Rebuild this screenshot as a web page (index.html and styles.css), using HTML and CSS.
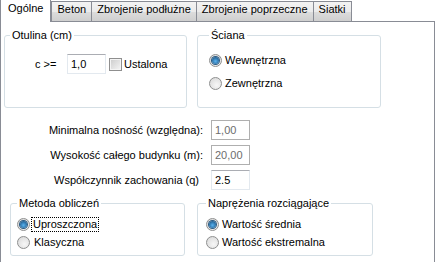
FILE: index.html
```html
<!DOCTYPE html>
<html lang="pl">
<head>
    <meta charset="UTF-8">
    <title>Parametry ściany</title>
    <link rel="stylesheet" href="styles.css">
</head>
<body>
    <div class="tabs">
        <div class="tab active">Ogólne</div>
        <div class="tab">Beton</div>
        <div class="tab">Zbrojenie podłużne</div>
        <div class="tab">Zbrojenie poprzeczne</div>
        <div class="tab">Siatki</div>
    </div>

    <div class="page">
        <div class="group-row top-row">
            <fieldset class="group cover">
                <legend>Otulina (cm)</legend>
                <div class="cover-line">
                    <span class="cover-label">c &gt;=</span>
                    <div class="field">1,0</div>
                    <span class="check"></span>
                    <span class="check-label">Ustalona</span>
                </div>
            </fieldset>
            <fieldset class="group wall">
                <legend>Ściana</legend>
                <div class="option first"><span class="radio on"></span><span>Wewnętrzna</span></div>
                <div class="option second"><span class="radio"></span><span>Zewnętrzna</span></div>
            </fieldset>
        </div>

        <div class="params">
            <label>Minimalna nośność (względna):</label>
            <div class="field off">1,00</div>
            <label>Wysokość całego budynku (m):</label>
            <div class="field off">20,00</div>
            <label class="no-colon">Współczynnik zachowania (q)</label>
            <div class="field">2.5</div>
        </div>

        <div class="group-row bottom-row">
            <fieldset class="group method">
                <legend>Metoda obliczeń</legend>
                <div class="option first"><span class="radio on"></span><span class="focus">Uproszczona</span></div>
                <div class="option"><span class="radio"></span><span class="plain">Klasyczna</span></div>
            </fieldset>
            <fieldset class="group stress">
                <legend>Naprężenia rozciągające</legend>
                <div class="option first"><span class="radio on"></span><span>Wartość średnia</span></div>
                <div class="option"><span class="radio"></span><span>Wartość ekstremalna</span></div>
            </fieldset>
        </div>
    </div>
</body>
</html>
```

FILE: styles.css
```css
body {
    margin: 0;
    background: #fff;
    color: #000;
    font-family: "Liberation Sans", Arial, sans-serif;
    font-size: 11px;
    line-height: 13px;
}
.tabs {
    display: flex;
    align-items: flex-end;
    height: 21px;
}
.tab {
    height: 18px;
    padding: 1px 5px 0 5px;
    border: 1px solid #898c95;
    border-bottom: none;
    margin-left: -1px;
    background: linear-gradient(#f3f3f3, #ebebeb 50%, #dddddd 51%, #cfcfcf);
}
.tab.active {
    position: relative;
    z-index: 1;
    height: 20px;
    padding: 2px 7px 0 7px;
    margin-left: 0;
    margin-bottom: -1px;
    margin-right: 1px;
    background: #fff;
}
.page {
    width: 433px;
    height: 240px;
    border: 1px solid #898c95;
}
.group-row {
    display: flex;
}
.top-row {
    margin-top: 7px;
    padding-left: 3px;
    gap: 10px;
}
.bottom-row {
    margin-top: 7px;
    padding-left: 9px;
    gap: 12px;
}
.group {
    box-sizing: border-box;
    margin: 0;
    min-width: 0;
    padding: 0 5px;
    border: 1px solid #d5dfe5;
    border-radius: 3px;
}
.group legend {
    padding: 0 2px;
    line-height: 13px;
}
.cover { width: 183px; height: 79px; }
.wall { width: 184px; height: 79px; padding-left: 11px; }
.method { width: 175px; height: 59px; padding-left: 6px; }
.stress { width: 176px; height: 59px; padding-left: 8px; }

.cover-line {
    display: flex;
    align-items: center;
    margin-top: 12px;
    padding-left: 25px;
}
.cover-label {
    width: 32px;
}
.field {
    box-sizing: border-box;
    width: 39px;
    height: 20px;
    padding: 3px 0 0 3px;
    border: 1px solid #e3e9ef;
    border-top-color: #abadb3;
    background: #fff;
}
.field.off {
    color: #6d6d6d;
    border-color: #afafaf;
}
.check {
    box-sizing: border-box;
    width: 13px;
    height: 13px;
    margin-left: 3px;
    border: 1px solid #8f8f8f;
    box-shadow: inset 0 0 0 1px #f4f4f4;
    background: linear-gradient(135deg, #cbcbcb, #f6f6f6);
}
.check-label {
    margin-left: 2px;
}

.option {
    display: flex;
    align-items: center;
    gap: 3px;
    height: 13px;
}
.wall .option.first { margin-top: 12px; }
.wall .option.second { margin-top: 10px; }
.method .option.first, .stress .option.first { margin-top: 8px; }
.method .option + .option, .stress .option + .option { margin-top: 5px; }
.radio {
    box-sizing: border-box;
    display: flex;
    align-items: center;
    justify-content: center;
    flex: none;
    width: 13px;
    height: 13px;
    border: 1px solid #8e8f8f;
    border-radius: 50%;
    background: radial-gradient(circle at 60% 65%, #f7f7f7, #d6d6d6);
}
.radio.on::after {
    content: "";
    width: 7px;
    height: 7px;
    border-radius: 50%;
    background: radial-gradient(circle at 50% 60%, #5bb3f0, #1c5a8c 80%);
    box-shadow: 0 0 0 1px #2a5a82;
}
.focus {
    padding: 0 1px;
    margin-left: -1px;
    outline: 1px dotted #000;
    outline-offset: 0;
}
.plain {
    margin-left: 1px;
}

.params {
    display: grid;
    grid-template-columns: 202px 39px;
    column-gap: 8px;
    row-gap: 5px;
    margin-top: 12px;
}
.params label {
    text-align: right;
    align-self: center;
}
.params .no-colon {
    padding-right: 4px;
}
```
